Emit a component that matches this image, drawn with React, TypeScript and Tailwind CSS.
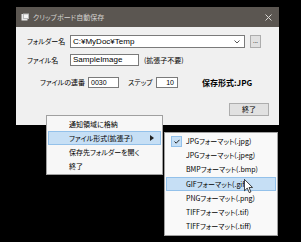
import React from "react";

const subItems = [
  "JPGフォーマット(.jpg)",
  "JPGフォーマット(.jpeg)",
  "BMPフォーマット(.bmp)",
  "GIFフォーマット(.gif)",
  "PNGフォーマット(.png)",
  "TIFFフォーマット(.tif)",
  "TIFFフォーマット(.tiff)",
];

const TitleIcon = () => (
  <svg width="8" height="8" viewBox="0 0 8 8">
    <rect x="0.5" y="1" width="6" height="6.5" fill="#e8e8e8" />
    <rect x="2" y="0.5" width="6" height="5.5" fill="#b8b8b8" />
    <rect x="3" y="1.5" width="4" height="3.5" fill="#f4f4f4" />
  </svg>
);

const Cursor = () => (
  <svg width="9" height="14" viewBox="0 0 12 19" className="absolute left-[244px] top-[179px]">
    <path d="M0.5 0.5 L0.5 16 L4.3 12.3 L7 18.5 L9.3 17.5 L6.7 11.5 L11.5 11.5 Z" fill="#fff" stroke="#000" strokeWidth="1" />
  </svg>
);

export default function App() {
  return (
    <div className="relative w-[301px] h-[242px] bg-black overflow-hidden font-['Noto_Sans_CJK_JP',sans-serif] text-[7px] leading-none whitespace-nowrap text-black [font-feature-settings:'palt']">
      <div className="pt-[7px] pl-[16px]">
        {/* window */}
        <div className="w-[263px]">
          <div className="h-[20px] bg-[#5b5651] flex items-center pl-[5px] pr-[7px]">
            <TitleIcon />
            <span className="ml-[4px] text-[#d4d2cf] text-[7px]">クリップボード自動保存</span>
            <svg width="7" height="7" viewBox="0 0 7 7" className="ml-auto">
              <path d="M0.5 0.5 L6.5 6.5 M6.5 0.5 L0.5 6.5" stroke="#d8d6d3" strokeWidth="1" />
            </svg>
          </div>
          <div className="h-[98px] bg-[#f0f0f0] pt-[8px] pl-[11px] flex flex-col">
            <div className="flex items-center h-[13px]">
              <span className="w-[43px]">フォルダー名</span>
              <div className="w-[175px] h-[13px] bg-white border border-[#7a7a7a] flex items-center pl-[2px] pr-[4px]">
                <span className="font-['Liberation_Sans',sans-serif] text-[8px]">C:¥MyDoc¥Temp</span>
                <svg width="6" height="4" viewBox="0 0 6 4" className="ml-auto">
                  <path d="M0.5 0.5 L3 3 L5.5 0.5" fill="none" stroke="#555" strokeWidth="1" />
                </svg>
              </div>
              <div className="ml-[5px] w-[11px] h-[13px] bg-[#e1e1e1] border border-[#adadad] flex items-center justify-center text-[6px] pb-[2px]">
                ...
              </div>
            </div>
            <div className="flex items-center h-[12px] mt-[6px]">
              <span className="w-[43px]">ファイル名</span>
              <div className="w-[69px] h-[12px] bg-white border border-[#7a7a7a] flex items-center pl-[2px]">
                <span className="font-['Liberation_Sans',sans-serif] text-[8px]">SampleImage</span>
              </div>
              <span className="ml-[5px]">(拡張子不要)</span>
            </div>
            <div className="flex items-center h-[11px] mt-[11px] pl-[13px]">
              <span className="w-[48px]">ファイルの連番</span>
              <div className="w-[31px] h-[11px] bg-white border border-[#7a7a7a] flex items-center pl-[2px]">
                <span className="font-['Liberation_Sans',sans-serif] text-[7px]">0030</span>
              </div>
              <span className="ml-[9px] w-[28px]">ステップ</span>
              <div className="w-[22px] h-[11px] bg-white border border-[#7a7a7a] flex items-center justify-end pr-[3px]">
                <span className="font-['Liberation_Sans',sans-serif] text-[7px]">10</span>
              </div>
              <span className="ml-[24px] font-bold text-[8px]">保存形式:JPG</span>
            </div>
            <div className="flex justify-end mt-[15px] pr-[10px]">
              <div className="w-[40px] h-[13px] bg-[#e1e1e1] border border-[#adadad] flex items-center justify-center">
                終了
              </div>
            </div>
          </div>
        </div>
      </div>

      {/* context menu */}
      <div className="absolute left-[46px] top-[115px] w-[117px] bg-[#f7f7f7] border border-[#a0a0a0] py-[1px] px-[1px] flex flex-col">
        <div className="h-[14px] flex items-center pl-[21px]">通知領域に格納</div>
        <div className="h-[14px] flex items-center pl-[20px] pr-[6px] bg-[#c6dff5] border border-[#93c1ea]">
          <span>ファイル形式(拡張子)</span>
          <svg width="4" height="6" viewBox="0 0 4 6" className="ml-auto">
            <path d="M0 0 L4 3 L0 6 Z" fill="#222" />
          </svg>
        </div>
        <div className="h-[14px] flex items-center pl-[21px]">保存先フォルダーを開く</div>
        <div className="h-[14px] flex items-center pl-[21px]">終了</div>
      </div>

      {/* submenu */}
      <div className="absolute left-[164px] top-[132px] w-[114px] bg-[#f9f9f9] border border-[#a0a0a0] py-[1px] px-[1px] flex flex-col">
        {subItems.map((label, i) => (
          <div
            key={label}
            className={`h-[14.3px] flex items-center ${i === 3 ? "bg-[#c6dff5] border border-[#93c1ea]" : "border border-transparent"}`}
          >
            <div className="w-[19px] flex justify-center">
              {i === 0 && (
                <div className="w-[11px] h-[11px] bg-[#c6dff5] border border-[#93c1ea] flex items-center justify-center">
                  <svg width="6" height="5" viewBox="0 0 6 5">
                    <path d="M0.5 2.5 L2.2 4.2 L5.5 0.8" fill="none" stroke="#222" strokeWidth="1" />
                  </svg>
                </div>
              )}
            </div>
            <span>{label}</span>
          </div>
        ))}
      </div>

      <Cursor />
    </div>
  );
}
